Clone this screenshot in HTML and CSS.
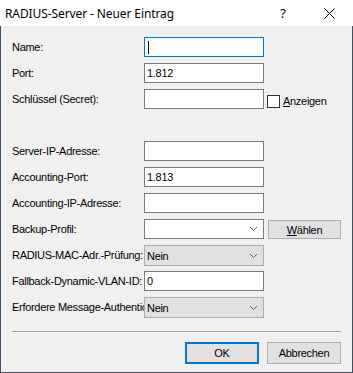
FILE: index.html
```html
<!DOCTYPE html>
<html lang="de">
<head>
    <meta charset="UTF-8">
    <title>RADIUS-Server - Neuer Eintrag</title>
    <link rel="stylesheet" href="styles.css">
</head>
<body>
    <div class="window">
        <div class="titlebar">
            <span class="title">RADIUS-Server - Neuer Eintrag</span>
            <span class="caption-btn help">?</span>
            <span class="caption-btn close">
                <svg width="11" height="11" viewBox="0 0 11 11">
                    <path d="M0.5 0.5 L10.5 10.5 M10.5 0.5 L0.5 10.5" stroke="#000" stroke-width="1" fill="none"/>
                </svg>
            </span>
        </div>

        <div class="client">
            <div class="form">
                <label class="label">Name:</label>
                <div class="textbox focused"><span class="caret"></span></div>
                <div></div>

                <label class="label">Port:</label>
                <div class="textbox">1.812</div>
                <div></div>

                <label class="label">Schlüssel (Secret):</label>
                <div class="textbox"></div>
                <div class="check-wrap">
                    <span class="checkbox"></span>
                    <span><u>A</u>nzeigen</span>
                </div>

                <div class="spacer"></div>

                <label class="label">Server-IP-Adresse:</label>
                <div class="textbox"></div>
                <div></div>

                <label class="label">Accounting-Port:</label>
                <div class="textbox">1.813</div>
                <div></div>

                <label class="label">Accounting-IP-Adresse:</label>
                <div class="textbox"></div>
                <div></div>

                <label class="label">Backup-Profil:</label>
                <div class="textbox combo">
                    <span class="combo-text"></span>
                    <svg class="chevron" width="7" height="4" viewBox="0 0 7 4">
                        <path d="M0 0 L3.5 3.5 L7 0" stroke="#606060" stroke-width="1" fill="none"/>
                    </svg>
                </div>
                <button class="btn choose"><u>W</u>ählen</button>

                <label class="label">RADIUS-MAC-Adr.-Prüfung:</label>
                <div class="dropdown">
                    <span class="combo-text">Nein</span>
                    <svg class="chevron" width="7" height="4" viewBox="0 0 7 4">
                        <path d="M0 0 L3.5 3.5 L7 0" stroke="#606060" stroke-width="1" fill="none"/>
                    </svg>
                </div>
                <div></div>

                <label class="label">Fallback-Dynamic-VLAN-ID:</label>
                <div class="textbox">0</div>
                <div></div>

                <label class="label">Erfordere Message-Authenticator:</label>
                <div class="dropdown">
                    <span class="combo-text">Nein</span>
                    <svg class="chevron" width="7" height="4" viewBox="0 0 7 4">
                        <path d="M0 0 L3.5 3.5 L7 0" stroke="#606060" stroke-width="1" fill="none"/>
                    </svg>
                </div>
                <div></div>
            </div>

            <div class="separator"></div>

            <div class="buttons">
                <button class="btn default">OK</button>
                <button class="btn">Abbrechen</button>
            </div>
        </div>
    </div>
</body>
</html>
```

FILE: styles.css
```css
* {
    margin: 0;
    padding: 0;
    box-sizing: border-box;
}

body {
    background: #f0f0f0;
    font-family: 'Liberation Sans', Arial, sans-serif;
    font-size: 11px;
    letter-spacing: -0.3px;
    color: #000;
}

.window {
    width: 353px;
    height: 373px;
    display: flex;
    flex-direction: column;
}

.titlebar {
    height: 26px;
    background: #fff;
    display: flex;
    align-items: center;
    flex-shrink: 0;
}

.title {
    font-family: 'Noto Sans', 'Open Sans', sans-serif;
    font-size: 12px;
    letter-spacing: -0.1px;
    padding-left: 5px;
    flex: 1;
}

.caption-btn {
    display: flex;
    align-items: center;
    justify-content: center;
    height: 26px;
}

.help {
    width: 44px;
    font-family: 'Noto Sans', sans-serif;
    font-size: 13px;
}

.close {
    width: 48px;
}

.client {
    flex: 1;
    background: #f0f0f0;
    border-left: 1px solid #3a536b;
    border-right: 1px solid #3a536b;
    border-bottom: 1px solid #3a536b;
    padding: 11px 11px 0 11px;
}

.form {
    display: grid;
    grid-template-columns: 132px 120px auto;
    grid-auto-rows: 20px;
    row-gap: 6px;
}

.spacer {
    grid-column: 1 / -1;
}

.label {
    line-height: 20px;
    white-space: nowrap;
    overflow: hidden;
}

.textbox {
    height: 20px;
    background: #fff;
    border: 1px solid #7a7a7a;
    padding-left: 2px;
    line-height: 18px;
    display: flex;
    align-items: center;
}

.textbox.focused {
    border-color: #0078d7;
}

.caret {
    display: block;
    width: 1px;
    height: 13px;
    background: #000;
    margin-left: 1px;
}

.combo,
.dropdown {
    justify-content: space-between;
    padding-right: 6px;
}

.dropdown {
    display: flex;
    align-items: center;
    height: 21px;
    background: #e1e1e1;
    border: 1px solid #adadad;
    padding-left: 2px;
}

.check-wrap {
    display: flex;
    align-items: center;
    margin-left: 3px;
    padding-top: 4px;
}

.checkbox {
    width: 13px;
    height: 13px;
    background: #fff;
    border: 1px solid #333;
    margin-right: 3px;
}

.btn {
    font-family: 'Liberation Sans', Arial, sans-serif;
    font-size: 11px;
    letter-spacing: -0.3px;
    color: #000;
    background: #e1e1e1;
    border: 1px solid #adadad;
    height: 22px;
    width: 74px;
}

.btn.choose {
    height: 19px;
    width: 73px;
    margin-left: 4px;
    margin-top: 1px;
}

.btn.default {
    border: 2px solid #0078d7;
}

.separator {
    margin-top: 14px;
    height: 2px;
    border-top: 1px solid #a0a0a0;
    border-bottom: 1px solid #fff;
}

.buttons {
    display: flex;
    justify-content: flex-end;
    gap: 8px;
    margin-top: 9px;
}
```
